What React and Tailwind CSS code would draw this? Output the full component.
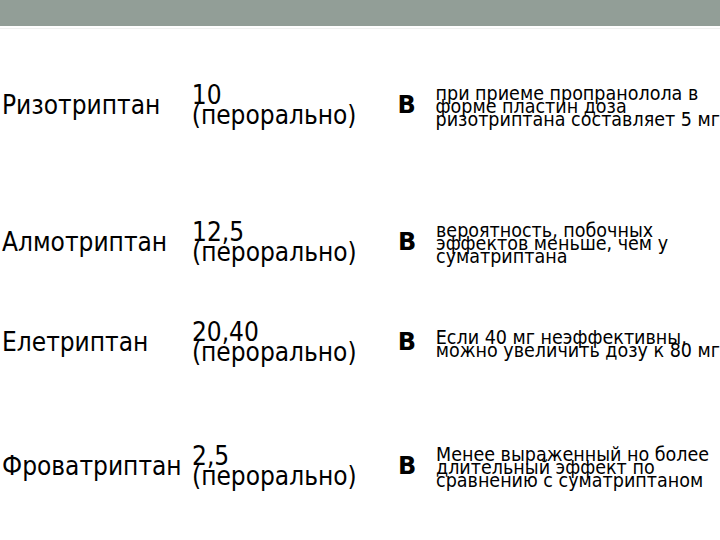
const rows = [
  {
    name: "Ризотриптан",
    dose: "10",
    h: "h-[152px]",
    note: ["при приеме пропранолола в", "форме пластин доза", "ризотриптана составляет 5 мг"],
  },
  {
    name: "Алмотриптан",
    dose: "12,5",
    h: "h-[124px]",
    note: ["вероятность, побочных", "эффектов меньше, чем у", "суматриптана"],
  },
  {
    name: "Елетриптан",
    dose: "20,40",
    h: "h-[76px]",
    note: ["Если 40 мг неэффективны,", "можно увеличить дозу к 80 мг"],
  },
  {
    name: "Фроватриптан",
    dose: "2,5",
    h: "h-[172px]",
    note: ["Менее выраженный но более", "длительный эффект по", "сравнению с суматриптаном"],
  },
];

export default function App() {
  return (
    <div
      className="w-[720px] h-[540px] overflow-hidden bg-white text-black"
      style={{ fontFamily: '"DejaVu Sans Condensed", "DejaVu Sans", sans-serif' }}
    >
      <div className="h-[26px] bg-[#929e97]" />
      <div className="h-[2px]" />
      <div className="h-px bg-[#f0f1f0]" />
      {rows.map((r, i) => (
        <div key={r.name} className={`flex items-center ${i === 0 ? "h-[151px]" : r.h}`}>
          <div className="w-[192px] pl-[2px] text-[26px] leading-none whitespace-nowrap">{r.name}</div>
          <div className="w-[206px] text-[26px] leading-[20px]">
            <div>{r.dose}</div>
            <div>(перорально)</div>
          </div>
          <div className="w-[38px] text-[24px] font-bold leading-none" style={{ fontFamily: '"DejaVu Sans", sans-serif' }}>
            B
          </div>
          <div className="flex-1 pt-[3px] text-[19.5px] leading-[13px] whitespace-nowrap">
            {r.note.map((l) => (
              <div key={l}>{l}</div>
            ))}
          </div>
        </div>
      ))}
    </div>
  );
}
